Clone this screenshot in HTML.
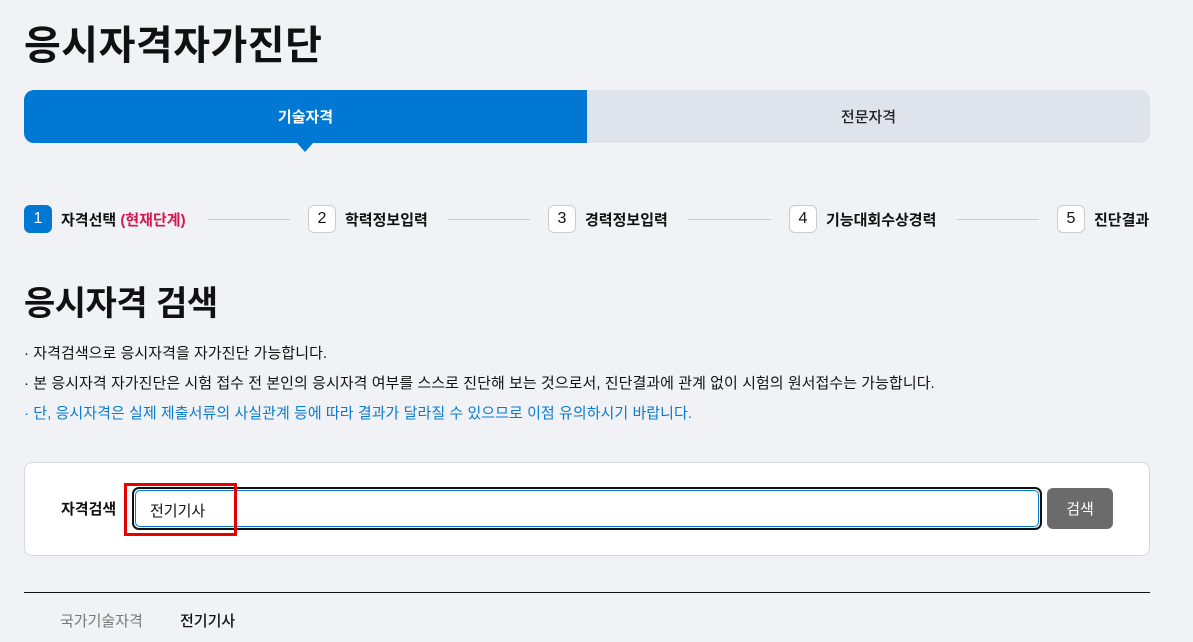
<!DOCTYPE html><html><head><meta charset="utf-8"><style>
*{margin:0;padding:0;box-sizing:border-box}
body{width:1193px;height:642px;background:#f1f2f6;font-family:"Liberation Sans","Noto Sans CJK KR",sans-serif;color:#111;position:relative;overflow:hidden}
.a{position:absolute}
h1{position:absolute;left:24px;top:13px;font-size:40px;font-weight:700;letter-spacing:0.5px}
.tabs{left:24px;top:90px;width:1126px;height:53px;border-radius:10px;overflow:hidden;display:flex;font-size:15px;font-weight:700}
.tabs div{flex:none;display:flex;align-items:center;justify-content:center}
.step{top:205px;display:flex;align-items:center;font-size:15px;font-weight:700}
.num{width:28px;height:28px;border-radius:6px;border:1px solid #ccc;background:#fff;display:flex;align-items:center;justify-content:center;font-weight:400;font-size:16px;margin-right:9px}
.line{top:219px;height:1px;background:#ccc}
h2{position:absolute;left:24px;top:276px;font-size:34px;font-weight:700;letter-spacing:-0.5px}
.p{left:24px;font-size:15px;letter-spacing:0.05px}
</style></head><body>
<h1>응시자격자가진단</h1>
<div class="a tabs"><div style="width:563px;background:#0078d4;color:#fff">기술자격</div><div style="width:563px;background:#dfe3ec;color:#222;font-weight:500">전문자격</div></div>
<div class="a" style="left:297px;top:143px;border-left:8px solid transparent;border-right:8px solid transparent;border-top:9px solid #0078d4"></div>
<div class="a step" style="left:24px"><div class="num" style="background:#0078d4;color:#fff;border-color:#0078d4">1</div>자격선택&nbsp;<span style="color:#d6174f">(현재단계)</span></div>
<div class="a line" style="left:208px;width:82px"></div>
<div class="a step" style="left:308px"><div class="num">2</div>학력정보입력</div>
<div class="a line" style="left:448px;width:82px"></div>
<div class="a step" style="left:548px"><div class="num">3</div>경력정보입력</div>
<div class="a line" style="left:688px;width:83px"></div>
<div class="a step" style="left:789px"><div class="num">4</div>기능대회수상경력</div>
<div class="a line" style="left:957px;width:82px"></div>
<div class="a step" style="left:1057px"><div class="num">5</div>진단결과</div>
<h2>응시자격 검색</h2>
<div class="a p" style="top:342px">· 자격검색으로 응시자격을 자가진단 가능합니다.</div>
<div class="a p" style="top:372px">· 본 응시자격 자가진단은 시험 접수 전 본인의 응시자격 여부를 스스로 진단해 보는 것으로서, 진단결과에 관계 없이 시험의 원서접수는 가능합니다.</div>
<div class="a p" style="top:402px;color:#0a7bd0">· 단, 응시자격은 실제 제출서류의 사실관계 등에 따라 결과가 달라질 수 있으므로 이점 유의하시기 바랍니다.</div>
<div class="a" style="left:24px;top:462px;width:1126px;height:94px;background:#fff;border:1px solid #d8d8dc;border-radius:8px"></div>
<div class="a" style="left:61px;top:498px;font-size:15px;font-weight:700">자격검색</div>
<div class="a" style="left:132px;top:487px;width:910px;height:43px;border:2px solid #111;border-radius:7px;padding:1px"><div style="height:100%;border:1.5px solid #0078d4;border-radius:5px;padding:9px 14px;font-size:15px">전기기사</div></div>
<div class="a" style="left:124px;top:483px;width:113px;height:53px;border:3px solid #e60000"></div>
<div class="a" style="left:1047px;top:488px;width:66px;height:41px;background:#6b6b6b;border-radius:6px;color:#fff;font-size:15px;display:flex;align-items:center;justify-content:center">검색</div>
<div class="a" style="left:24px;top:592px;width:1126px;height:1px;background:#111"></div>
<div class="a" style="left:60px;top:610px;font-size:15px;color:#777">국가기술자격</div>
<div class="a" style="left:180px;top:610px;font-size:15px;font-weight:500">전기기사</div>
</body></html>
